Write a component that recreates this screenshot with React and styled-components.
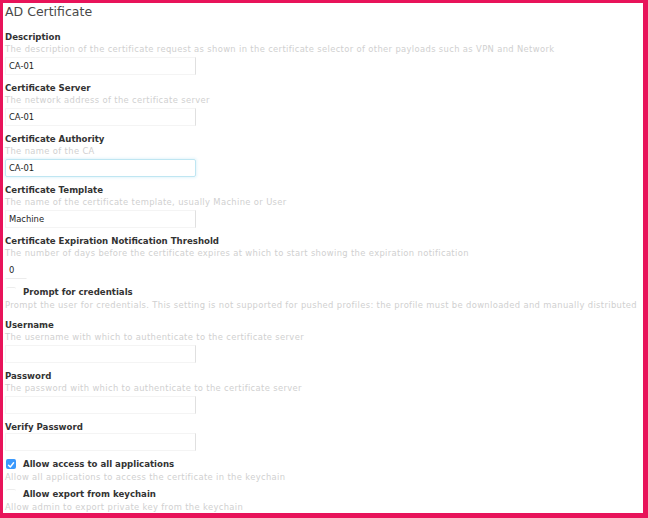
import React from 'react';
import styled, { createGlobalStyle } from 'styled-components';

const GlobalStyle = createGlobalStyle`
  html, body {
    margin: 0;
    padding: 0;
    background: #ffffff;
  }
  * {
    box-sizing: border-box;
  }
`;

const Frame = styled.div`
  width: 648px;
  height: 518px;
  border-style: solid;
  border-color: #e8135a;
  border-width: 3px 5px 5px 3px;
  background: #fff;
  overflow: hidden;
  font-family: "DejaVu Sans", "Liberation Sans", sans-serif;
  padding: 0 0 0 2px;
`;

const Title = styled.h1`
  margin: 0 0 10px;
  font-size: 12.5px;
  line-height: 18px;
  font-weight: 400;
  color: #4a4a4a;
`;

const Field = styled.div`
  display: flex;
  flex-direction: column;
  margin-bottom: ${p => p.$gap ?? 7}px;
`;

const Label = styled.div`
  font-size: 8.6px;
  line-height: 12px;
  font-weight: 700;
  color: #333;
  white-space: nowrap;
`;

const Hint = styled.div`
  font-size: 8.4px;
  line-height: 13px;
  color: #d0d0d0;
  letter-spacing: 0.35px;
  white-space: nowrap;
`;

const Input = styled.div`
  margin-top: ${p => p.$top ?? 1}px;
  width: ${p => p.$width || 191}px;
  height: 18px;
  display: flex;
  align-items: center;
  padding-left: 3px;
  font-size: 8.4px;
  color: #222;
  border: 1px solid ${p => (p.$focused ? '#bfe6f2' : '#f4f4f4')};
  border-right-color: ${p => (p.$focused ? '#bfe6f2' : '#e0e0e0')};
  border-radius: ${p => (p.$focused ? '2px' : '0')};
  box-shadow: ${p => (p.$focused ? '0 0 3px 1px #e4f5fb' : 'none')};
`;

const SmallInput = styled(Input)`
  border-color: transparent;
  border-bottom-color: #ececec;
  border-right-color: transparent;
`;

const CheckRow = styled.div`
  display: flex;
  align-items: center;
  gap: 7px;
  height: 14px;
`;

const Box = styled.span`
  width: 10px;
  height: 10px;
  margin-left: 1px;
  border-radius: 2px;
  display: flex;
  align-items: center;
  justify-content: center;
  background: ${p => (p.$checked ? '#3b99fc' : 'transparent')};
  border-top: 1px solid ${p => (p.$checked ? '#3b99fc' : '#ececec')};
`;

const CheckLabel = styled(Label)`
  line-height: 14px;
`;

const fields = [
  { label: 'Description', hint: 'The description of the certificate request as shown in the certificate selector of other payloads such as VPN and Network', value: 'CA-01' },
  { label: 'Certificate Server', hint: 'The network address of the certificate server', value: 'CA-01' },
  { label: 'Certificate Authority', hint: 'The name of the CA', value: 'CA-01', focused: true },
  { label: 'Certificate Template', hint: 'The name of the certificate template, usually Machine or User', value: 'Machine' },
];

const Check = ({ checked, label, hint, gap }) => (
  <Field $gap={gap}>
    <CheckRow>
      <Box $checked={checked}>
        {checked && (
          <svg width="8" height="8" viewBox="0 0 8 8">
            <path d="M1.5 4.2 L3.3 6 L6.6 1.8" fill="none" stroke="#fff" strokeWidth="1.4" strokeLinecap="round" strokeLinejoin="round" />
          </svg>
        )}
      </Box>
      <CheckLabel>{label}</CheckLabel>
    </CheckRow>
    <Hint>{hint}</Hint>
  </Field>
);

export default function App() {
  return (
    <>
      <GlobalStyle />
      <Frame>
        <Title>AD Certificate</Title>

        {fields.map((f, i) => (
          <Field key={i}>
            <Label>{f.label}</Label>
            <Hint>{f.hint}</Hint>
            <Input $focused={f.focused}>{f.value}</Input>
          </Field>
        ))}

        <Field $gap={6}>
          <Label>Certificate Expiration Notification Threshold</Label>
          <Hint>The number of days before the certificate expires at which to start showing the expiration notification</Hint>
          <SmallInput $width={22}>0</SmallInput>
        </Field>

        <Check
          label="Prompt for credentials"
          hint="Prompt the user for credentials. This setting is not supported for pushed profiles: the profile must be downloaded and manually distributed"
        />

        <Field>
          <Label>Username</Label>
          <Hint>The username with which to authenticate to the certificate server</Hint>
          <Input />
        </Field>

        <Field>
          <Label>Password</Label>
          <Hint>The password with which to authenticate to the certificate server</Hint>
          <Input />
        </Field>

        <Field $gap={6}>
          <Label>Verify Password</Label>
          <Input $top={0} />
        </Field>

        <Check checked gap={3} label="Allow access to all applications" hint="Allow all applications to access the certificate in the keychain" />
        <Check label="Allow export from keychain" hint="Allow admin to export private key from the keychain" />
      </Frame>
    </>
  );
}
